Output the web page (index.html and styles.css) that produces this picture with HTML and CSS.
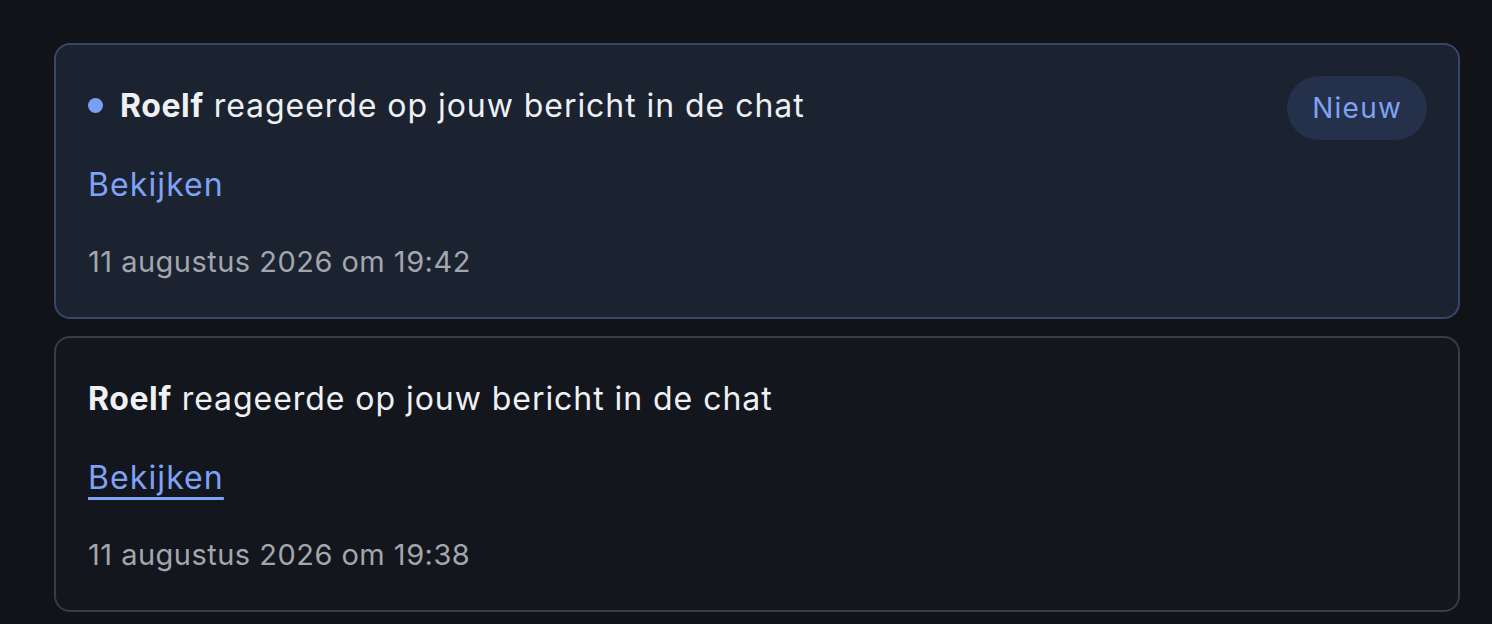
FILE: index.html
```html
<!DOCTYPE html>
<html lang="nl">
<head>
<meta charset="utf-8">
<title>Meldingen</title>
<link rel="stylesheet" href="styles.css">
</head>
<body>
<main class="list">
  <article class="card card-new">
    <div class="card-head">
      <p class="msg"><span class="dot"></span><strong>Roelf</strong> reageerde op jouw bericht in de chat</p>
      <span class="badge">Nieuw</span>
    </div>
    <a class="link" href="#">Bekijken</a>
    <time class="date">11 augustus 2026 om 19:42</time>
  </article>
  <article class="card">
    <div class="card-head">
      <p class="msg"><strong>Roelf</strong> reageerde op jouw bericht in de chat</p>
    </div>
    <a class="link link-under" href="#">Bekijken</a>
    <time class="date">11 augustus 2026 om 19:38</time>
  </article>
</main>
</body>
</html>
```
FILE: styles.css
```css
* { box-sizing: border-box; }
html, body {
  margin: 0;
  background: #111318;
  font-family: Inter, "Noto Sans", sans-serif;
  color: #eef0f3;
}
.list {
  display: flex;
  flex-direction: column;
  gap: 17px;
  padding: 43px 32px 0 54px;
}
.card {
  display: flex;
  flex-direction: column;
  height: 276px;
  border: 2px solid #393c43;
  border-radius: 16px;
  background: #13161c;
  padding: 31px 31px 31px 32px;
}
.card-new {
  border-color: #38466a;
  background: #1b2230;
}
.card-head {
  display: flex;
  align-items: flex-start;
  justify-content: space-between;
  min-height: 64px;
}
.msg {
  margin: 8px 0 0;
  font-size: 32px;
  line-height: 44px;
  font-weight: 400;
  letter-spacing: 0.95px;
}
.msg strong {
  font-weight: 700;
  letter-spacing: 0.6px;
}
.dot {
  display: inline-block;
  vertical-align: middle;
  width: 15px;
  height: 15px;
  border-radius: 50%;
  background: #7b9ff7;
  margin: -6px 17px 0 0;
}
.badge {
  display: inline-flex;
  align-items: center;
  height: 64px;
  padding: 0 25px;
  border-radius: 32px;
  background: #25304a;
  color: #7fa2f4;
  font-size: 28px;
  letter-spacing: 1.2px;
}
.link {
  align-self: flex-start;
  margin-top: 21px;
  font-size: 32px;
  line-height: 48px;
  color: #7ea2f6;
  text-decoration: none;
  letter-spacing: 1.1px;
}
.link-under {
  text-decoration: underline;
  text-decoration-thickness: 2.5px;
  text-underline-offset: 8px;
}
.date {
  margin-top: 31px;
  font-size: 29px;
  line-height: 44px;
  color: #a3a6ad;
  letter-spacing: 0.48px;
}
```
